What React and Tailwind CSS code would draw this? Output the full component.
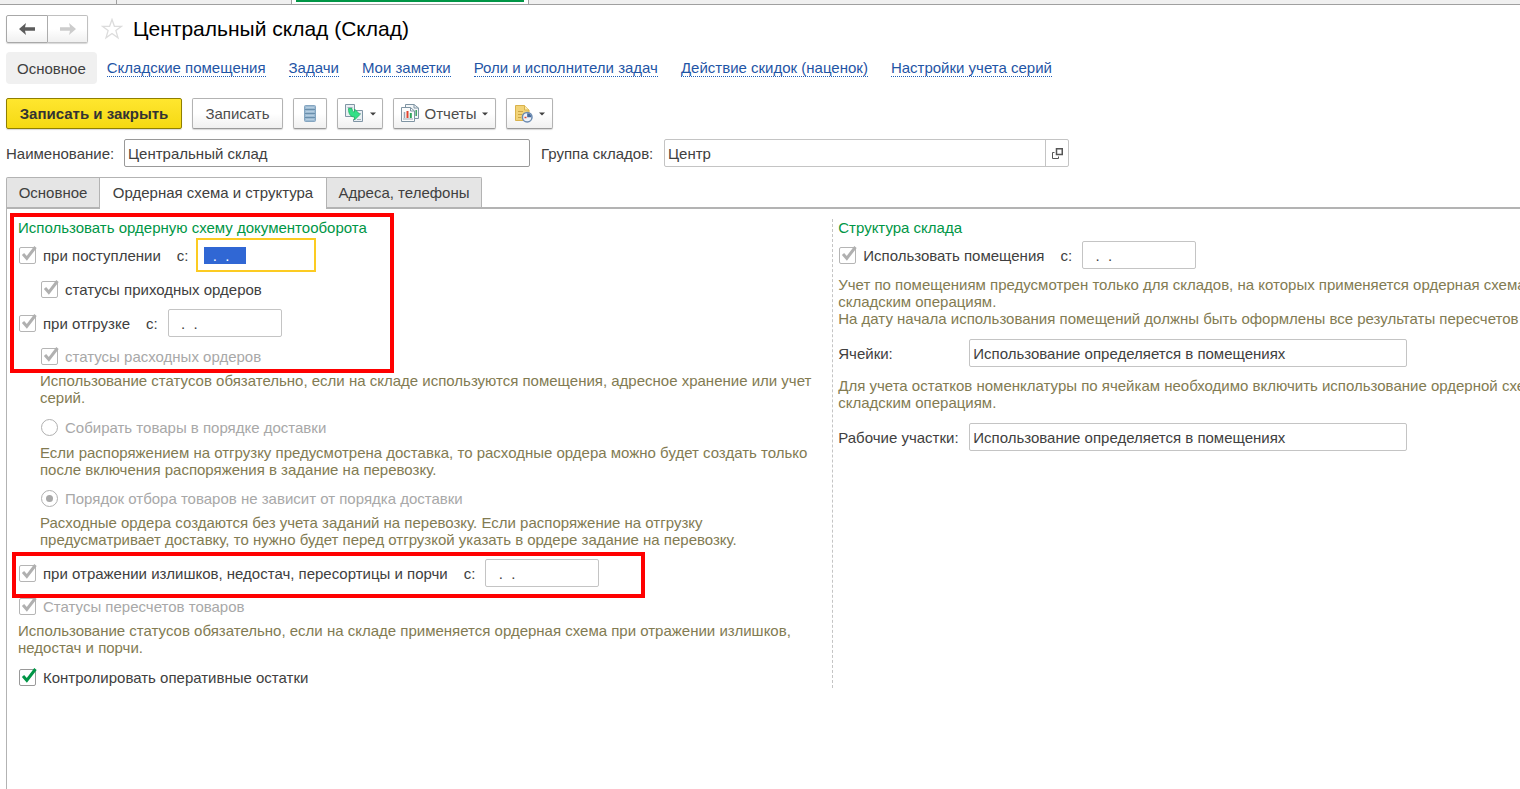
import { useEffect, useRef } from 'react';

const links = [
  'Складские помещения',
  'Задачи',
  'Мои заметки',
  'Роли и исполнители задач',
  'Действие скидок (наценок)',
  'Настройки учета серий',
];

const btnStyle =
  'flex h-[31px] items-center justify-center rounded-xs border border-[#b3b3b3] border-b-[#9a9a9a] bg-linear-to-b from-white from-50% to-[#f0f0f0] text-[#4d4d4d] shadow-[0_1px_1px_#d8d8d8]';

function Arrow({ flip, color }) {
  return (
    <svg width="16" height="12" viewBox="0 0 16 12" className={flip ? '-scale-x-100' : ''}>
      <path d="M0 6 L7 0 L6 4.3 H16 V7.7 H6 L7 12 Z" fill={color} />
    </svg>
  );
}

function Caret() {
  return (
    <svg width="6" height="4" viewBox="0 0 6 4">
      <path d="M0 0.5 H6 L3 3.5 Z" fill="#404040" />
    </svg>
  );
}

function StarIcon() {
  return (
    <svg width="22" height="22" viewBox="0 0 22 22">
      <path
        d="M11 1.5 L13.4 8.3 H20.6 L14.9 12.6 L17 19.8 L11 15.5 L5 19.8 L7.1 12.6 L1.4 8.3 H8.6 Z"
        fill="white"
        stroke="#dcdcdc"
        strokeWidth="1.3"
      />
    </svg>
  );
}

function ListIcon() {
  return (
    <svg width="12" height="17" viewBox="0 0 12 17">
      <rect x="0.5" y="0.5" width="11" height="16" rx="1" fill="#9dbbd3" stroke="#84a5c0" />
      <path d="M1 4.5 H11 M1 8.5 H11 M1 12.5 H11" stroke="#6a8fac" />
      <path d="M2 2.5 H10 M2 6.5 H10 M2 10.5 H10 M2 14.5 H10" stroke="#b5cde0" />
    </svg>
  );
}

function CreateFromIcon() {
  return (
    <svg width="19" height="19" viewBox="0 0 19 19">
      <path d="M0.5 0.5 H9.5 V12.5 H0.5 Z" fill="#e9eff3" stroke="#8095a5" />
      <path d="M2.5 3.5 H7.5" stroke="#9eb0bd" />
      <path d="M9.5 6.5 H17.5 V17.5 H8.5 V15" fill="#e9eff3" stroke="#8095a5" />
      <path d="M13 9.5 H16 M12 15.5 H16" stroke="#9eb0bd" />
      <path
        d="M3.5 4.5 H7 C7 7 8 8 9.5 8 V5 L15 10.5 L9.5 16 V13 C5.5 13 3.5 10 3.5 4.5 Z"
        fill="#33e088"
        stroke="#1fae60"
        strokeWidth="0.8"
      />
    </svg>
  );
}

function ReportsIcon() {
  return (
    <svg width="18" height="19" viewBox="0 0 18 19">
      <path d="M4.5 0.5 H13 L17.5 4 V14.5 H4.5 Z" fill="#f4f7f9" stroke="#7f94a3" />
      <path d="M13 0.5 V4 H17.5" fill="none" stroke="#7f94a3" />
      <path d="M15.2 6 V12" stroke="#3aa05f" strokeWidth="1.5" />
      <path d="M0.5 3.5 H9.5 L13.5 7 V17.5 H0.5 Z" fill="#fbfcfc" stroke="#7f94a3" />
      <path d="M9.5 3.5 V7 H13.5" fill="none" stroke="#7f94a3" />
      <path d="M3.5 8 V14" stroke="#9aa7b1" strokeWidth="1.5" />
      <path d="M6.5 7 V14" stroke="#e0442f" strokeWidth="2" />
      <path d="M9.8 9 V14" stroke="#2fa55c" strokeWidth="2" />
      <path d="M2 15 H12" stroke="#9aa7b1" />
    </svg>
  );
}

function DocClockIcon() {
  return (
    <svg width="18" height="18" viewBox="0 0 18 18">
      <path d="M0.5 0.5 H9.5 L14 5 V15.5 H0.5 Z" fill="#f2d377" stroke="#d9b24c" />
      <path d="M9.5 0.5 V5 H14" fill="#fae9ae" stroke="#d9b24c" />
      <path d="M3 6.5 H8 M3 9.5 H7 M3 12.5 H6" stroke="#cda545" />
      <circle cx="12.2" cy="12.2" r="4.8" fill="#eef3fa" stroke="#6b8ab0" strokeWidth="1.5" />
      <path d="M12.2 12.2 V8.2 A4 4 0 0 1 16.2 12.2 Z" fill="#44699c" />
      <path d="M9.5 12.5 H11.5" stroke="#e0442f" strokeWidth="1.5" />
    </svg>
  );
}

function OpenIcon() {
  return (
    <svg width="11" height="11" viewBox="0 0 11 11" fill="none" stroke="#555555">
      <path d="M4.5 0.75 H10.25 V6.5 H4.5 Z" strokeWidth="1.5" />
      <path d="M2.5 4.5 H0.5 V10.5 H6.5 V8.5" />
    </svg>
  );
}

function Tick({ id, label, muted, active }) {
  return (
    <div className="flex items-center gap-1.5">
      <span className="grid shrink-0">
        <input
          id={id}
          type="checkbox"
          defaultChecked
          disabled={!active}
          className={`col-start-1 row-start-1 m-px size-[17px] appearance-none rounded-xs border bg-white ${active ? 'border-[#999999]' : 'border-[#b5b5b5]'}`}
        />
        <svg width="19" height="19" viewBox="0 0 19 19" className="pointer-events-none col-start-1 row-start-1">
          <path
            d="M5 8 L8.8 12.3 L17.5 1"
            fill="none"
            stroke={active ? '#009646' : '#b0b0b0'}
            strokeWidth="3"
          />
        </svg>
      </span>
      <label htmlFor={id} className={muted ? 'text-[#a8a8a8]' : 'text-[#404040]'}>{label}</label>
    </div>
  );
}

function Radio({ id, label, checked }) {
  return (
    <div className="flex items-center gap-[7px]">
      <span className="ml-px grid shrink-0 place-items-center">
        <input
          id={id}
          type="radio"
          name="picking"
          defaultChecked={checked}
          disabled
          className="peer col-start-1 row-start-1 size-[17px] appearance-none rounded-full border border-[#b0b0b0] bg-white"
        />
        <span className="col-start-1 row-start-1 hidden size-[7px] rounded-full bg-[#a8a8a8] peer-checked:block" />
      </span>
      <label htmlFor={id} className="text-[#a8a8a8]">{label}</label>
    </div>
  );
}

function DateField({ id }) {
  return (
    <div className="flex items-center">
      <label htmlFor={id} className="ml-4 text-[#404040]">с:</label>
      <input
        id={id}
        type="text"
        defaultValue="  .  .    "
        className="ml-2.5 h-7 w-[114px] rounded-xs border border-[#c4c4c4] bg-white px-1 text-[#404040] outline-none"
      />
    </div>
  );
}

function Note({ children, className = '' }) {
  return <p className={`text-[#827b52] ${className}`}>{children}</p>;
}

export default function App() {
  const dateRef = useRef(null);

  useEffect(() => {
    dateRef.current.focus();
    dateRef.current.select();
  }, []);

  return (
    <div className="flex min-h-screen flex-col overflow-hidden bg-white font-['Liberation_Sans',Arial,sans-serif] text-[15px] leading-[17px] text-[#404040]">
      {/* window tabs */}
      <div className="flex h-[5px] border-b border-[#a0a0a0] bg-[#f0f0f0]">
        <div className="w-[117px] border-r border-[#a0a0a0]" />
        <div className="w-[175px] border-r border-[#a0a0a0]" />
        <div className="w-[237px] border-r border-[#a0a0a0] bg-white px-1">
          <div className="h-0.5 bg-[#009646]" />
        </div>
      </div>

      <header className="px-1.5 pt-2.5">
        <div className="flex h-7 items-center">
          <button type="button" aria-label="Назад" className="flex h-7 w-[42px] items-center justify-center rounded-l-xs border border-[#a8a8a8] bg-linear-to-b from-white from-50% to-[#f0f0f0] shadow-[0_1px_1px_#d8d8d8]">
            <Arrow color="#5c5c5c" />
          </button>
          <button type="button" aria-label="Вперед" className="flex h-7 w-10 items-center justify-center rounded-r-xs border border-l-0 border-[#c0c0c0] bg-linear-to-b from-white from-50% to-[#f0f0f0] shadow-[0_1px_1px_#d8d8d8]">
            <Arrow flip color="#cccccc" />
          </button>
          <button type="button" aria-label="В избранное" className="ml-[13px]">
            <StarIcon />
          </button>
          <h1 className="ml-2.5 text-[21px] leading-7 text-black">Центральный склад (Склад)</h1>
        </div>

        <nav className="mt-[9px] flex items-center">
          <span className="mr-2.5 flex h-8 items-center rounded-sm bg-[#f0f0f0] px-[11px]">Основное</span>
          <div className="flex gap-[23px]">
            {links.map((link) => (
              <a key={link} href="#" className="border-b border-dotted border-[#1f5fb8] text-[#1f55a5]">{link}</a>
            ))}
          </div>
        </nav>

        <div className="mt-3.5 flex gap-2.5">
          <button type="button" className="h-[31px] w-44 rounded-xs border border-[#8f7f00] bg-linear-to-b from-[#ffe62e] to-[#f5d90f] font-bold text-[#333333] shadow-[0_1px_1px_#d8d8d8]">
            Записать и закрыть
          </button>
          <button type="button" className={`${btnStyle} w-[91px]`}>Записать</button>
          <button type="button" aria-label="Список" className={`${btnStyle} w-[34px]`}>
            <ListIcon />
          </button>
          <button type="button" aria-label="Создать на основании" className={`${btnStyle} w-[46px] gap-1.5`}>
            <CreateFromIcon />
            <Caret />
          </button>
          <button type="button" className={`${btnStyle} w-[103px] gap-1.5`}>
            <ReportsIcon />
            Отчеты
            <Caret />
          </button>
          <button type="button" aria-label="Напоминания" className={`${btnStyle} w-[47px] gap-1.5`}>
            <DocClockIcon />
            <Caret />
          </button>
        </div>

        <div className="mt-2.5 flex items-center">
          <label htmlFor="name" className="w-[118px]">Наименование:</label>
          <input id="name" type="text" defaultValue="Центральный склад" className="h-7 w-[406px] rounded-xs border border-[#999999] px-[3px] outline-none" />
          <label htmlFor="group" className="ml-[11px] w-[123px]">Группа складов:</label>
          <div className="flex h-7 w-[405px] rounded-xs border border-[#c4c4c4]">
            <input id="group" type="text" defaultValue="Центр" className="min-w-0 flex-1 px-[3px] outline-none" />
            <button type="button" aria-label="Открыть" className="flex w-[23px] items-center justify-center border-l border-[#c4c4c4]">
              <OpenIcon />
            </button>
          </div>
        </div>
      </header>

      <div className="mt-2.5 ml-1.5 flex h-8 border-b-2 border-[#b3b3b3]" role="tablist">
        <button type="button" role="tab" className="w-[94px] rounded-tl-xs border border-b-0 border-[#b3b3b3] bg-[#e5e5e5]">Основное</button>
        <button type="button" role="tab" aria-selected="true" className="-mb-0.5 w-[226px] border-t border-[#b3b3b3] bg-white pb-0.5">
          Ордерная схема и структура
        </button>
        <button type="button" role="tab" className="w-[156px] rounded-tr-xs border border-b-0 border-[#b3b3b3] bg-[#e5e5e5]">Адреса, телефоны</button>
      </div>

      <main className="ml-1.5 grid flex-1 grid-cols-[6fr_5fr] items-start border-l border-[#b3b3b3] pt-2.5">
        <section className="-mr-px pr-2 pl-[11px]">
          <div className="relative">
            <h2 className="text-[#009646]">Использовать ордерную схему документооборота</h2>
            <div className="mt-0.5 flex h-[34px] items-center">
              <Tick id="receipt" label="при поступлении" />
              <label htmlFor="receipt-date" className="ml-4">с:</label>
              <input
                id="receipt-date"
                ref={dateRef}
                type="text"
                defaultValue="  .  .    "
                className="ml-2 h-[34px] w-[120px] border-2 border-[#fccb22] bg-white px-1.5 outline-none selection:bg-[#3067d4] selection:text-white"
              />
            </div>
            <div className="flex h-[34px] items-center pl-[22px]">
              <Tick id="receipt-status" label="статусы приходных ордеров" />
            </div>
            <div className="flex h-[34px] items-center">
              <Tick id="shipment" label="при отгрузке" />
              <DateField id="shipment-date" />
            </div>
            <div className="flex h-8 items-center pl-[22px]">
              <Tick id="shipment-status" label="статусы расходных ордеров" muted />
            </div>
            <div className="pointer-events-none absolute -top-1.5 -left-2 h-40 w-96 border-4 border-[#ff0000]" />
          </div>

          <div className="pl-[22px]">
            <Note>
              Использование статусов обязательно, если на складе используются помещения, адресное хранение или учет серий.
            </Note>
            <div className="mt-1 flex h-[34px] items-center">
              <Radio id="by-delivery" label="Собирать товары в порядке доставки" />
            </div>
            <Note>
              Если распоряжением на отгрузку предусмотрена доставка, то расходные ордера можно будет создать только после включения распоряжения в задание на перевозку.
            </Note>
            <div className="mt-1 flex h-8 items-center">
              <Radio id="any-order" label="Порядок отбора товаров не зависит от порядка доставки" checked />
            </div>
            <Note>
              Расходные ордера создаются без учета заданий на перевозку. Если распоряжение на отгрузку предусматривает доставку, то нужно будет перед отгрузкой указать в ордере задание на перевозку.
            </Note>
          </div>

          <div className="relative mt-2 flex h-[34px] items-center">
            <Tick id="surplus" label="при отражении излишков, недостач, пересортицы и порчи" />
            <DateField id="surplus-date" />
            <div className="pointer-events-none absolute -top-1 -left-1.5 h-[46px] w-[633px] border-4 border-[#ff0000]" />
          </div>
          <div className="flex h-8 items-center">
            <Tick id="recount" label="Статусы пересчетов товаров" muted />
          </div>
          <Note>
            Использование статусов обязательно, если на складе применяется ордерная схема при отражении излишков, недостач и порчи.
          </Note>
          <div className="mt-1 flex h-[34px] items-center">
            <Tick id="control" label="Контролировать оперативные остатки" active />
          </div>
        </section>

        <section className="h-[469px] min-w-0 overflow-hidden border-l border-dashed border-[#c4c4c4] pl-[5px] whitespace-nowrap">
          <h2 className="text-[#009646]">Структура склада</h2>
          <div className="mt-0.5 flex h-[34px] items-center">
            <Tick id="rooms" label="Использовать помещения" />
            <DateField id="rooms-date" />
          </div>
          <Note className="mt-1">
            Учет по помещениям предусмотрен только для складов, на которых применяется ордерная схема
            <br />
            складским операциям.
            <br />
            На дату начала использования помещений должны быть оформлены все результаты пересчетов
          </Note>
          <div className="mt-3 flex items-center">
            <label htmlFor="cells" className="w-[131px]">Ячейки:</label>
            <input id="cells" type="text" defaultValue="Использование определяется в помещениях" className="h-7 w-[438px] rounded-xs border border-[#c4c4c4] px-[3px] outline-none" />
          </div>
          <Note className="mt-2.5">
            Для учета остатков номенклатуры по ячейкам необходимо включить использование ордерной схемы
            <br />
            складским операциям.
          </Note>
          <div className="mt-3 flex items-center">
            <label htmlFor="areas" className="w-[131px]">Рабочие участки:</label>
            <input id="areas" type="text" defaultValue="Использование определяется в помещениях" className="h-7 w-[438px] rounded-xs border border-[#c4c4c4] px-[3px] outline-none" />
          </div>
        </section>
      </main>
    </div>
  );
}
